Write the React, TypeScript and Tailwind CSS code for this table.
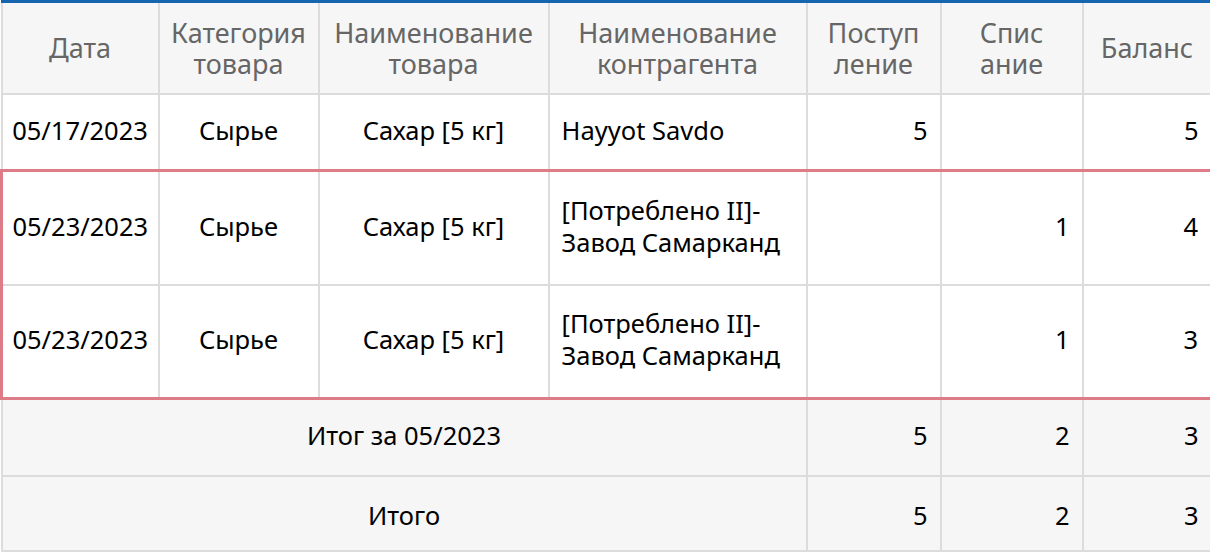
const rows = [
  { date: "05/17/2023", cat: "Сырье", name: "Сахар [5 кг]", party: ["Hayyot Savdo"], inc: "5", out: "", bal: "5" },
  { date: "05/23/2023", cat: "Сырье", name: "Сахар [5 кг]", party: ["[Потреблено II]-", "Завод Самарканд"], inc: "", out: "1", bal: "4" },
  { date: "05/23/2023", cat: "Сырье", name: "Сахар [5 кг]", party: ["[Потреблено II]-", "Завод Самарканд"], inc: "", out: "1", bal: "3" },
];

const totals = [
  { label: "Итог за 05/2023", inc: "5", out: "2", bal: "3" },
  { label: "Итого", inc: "5", out: "2", bal: "3" },
];

const cell = "border-2 border-[#dcdcdc]";
const head = `${cell} border-t-[3px] border-t-[#1565b0] font-normal`;

export default function App() {
  return (
    <div className="w-[1210px] h-[554px] bg-white overflow-hidden" style={{ fontFamily: "'Noto Sans', sans-serif" }}>
      <table className="w-[1210px] table-fixed border-collapse text-[25.5px] text-black">
        <colgroup>
          <col className="w-[157px]" />
          <col className="w-[160px]" />
          <col className="w-[230px]" />
          <col className="w-[258px]" />
          <col className="w-[134px]" />
          <col className="w-[142px]" />
          <col className="w-[129px]" />
        </colgroup>
        <thead>
          <tr className="h-[92px] bg-[#f6f6f6] text-[#666] text-[27px] leading-[31px]">
            <th className={head}>Дата</th>
            <th className={head}>Категория<br />товара</th>
            <th className={head}>Наименование<br />товара</th>
            <th className={head}>Наименование<br />контрагента</th>
            <th className={head}>Поступ<br />ление</th>
            <th className={head}>Спис<br />ание</th>
            <th className={head}>Баланс</th>
          </tr>
        </thead>
        <tbody>
          {rows.map((r, i) => {
            const hl = i > 0;
            const top = i === 1 ? "border-t-[3px] border-t-[#dd7b86]" : "";
            const bottom = i === 2 ? "border-b-[3px] border-b-[#dd7b86]" : "";
            const rowCls = `${cell} ${top} ${bottom} pb-1`;
            return (
              <tr key={i} className={i === 0 ? "h-[77px]" : "h-[114px]"}>
                <td className={`${rowCls} text-center ${hl ? "border-l-[3px] border-l-[#dd7b86]" : ""}`}>{r.date}</td>
                <td className={`${rowCls} text-center`}>{r.cat}</td>
                <td className={`${rowCls} text-center`}>{r.name}</td>
                <td className={`${rowCls} text-left px-3 leading-[32px]`}>
                  {r.party.map((p, j) => (
                    <div key={j}>{p}</div>
                  ))}
                </td>
                <td className={`${rowCls} text-right pr-3`}>{r.inc}</td>
                <td className={`${rowCls} text-right pr-3`}>{r.out}</td>
                <td className={`${rowCls} text-right pr-3 ${hl ? "border-r-[3px] border-r-[#dd7b86]" : ""}`}>{r.bal}</td>
              </tr>
            );
          })}
          {totals.map((t, i) => {
            const pad = i === 0 ? "pb-1" : "pt-[5px]";
            return (
              <tr key={t.label} className={`${i === 0 ? "h-[77px]" : "h-[75px]"} bg-[#f6f6f6]`}>
                <td colSpan={4} className={`${cell} text-center ${pad}`}>{t.label}</td>
                <td className={`${cell} text-right pr-3 ${pad}`}>{t.inc}</td>
                <td className={`${cell} text-right pr-3 ${pad}`}>{t.out}</td>
                <td className={`${cell} text-right pr-3 ${pad}`}>{t.bal}</td>
              </tr>
            );
          })}
        </tbody>
      </table>
    </div>
  );
}
